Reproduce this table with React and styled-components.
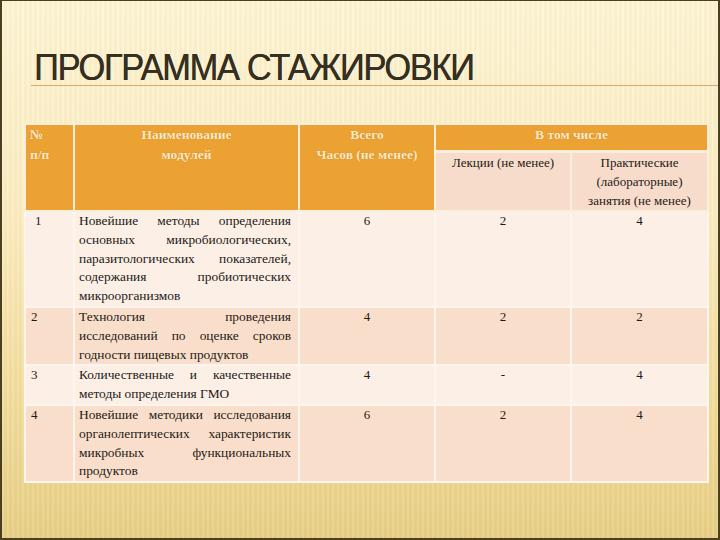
import React from 'react';
import styled, { createGlobalStyle } from 'styled-components';

const GlobalStyle = createGlobalStyle`
  html, body {
    margin: 0;
    padding: 0;
  }
  body {
    width: 720px;
    height: 540px;
    overflow: hidden;
    font-family: "Liberation Serif", "DejaVu Serif", serif;
  }
`;

const rows = [
  {
    n: '1',
    title:
      'Новейшие методы определения основных микробиологических, паразитологических показателей, содержания пробиотических микроорганизмов',
    total: '6',
    lect: '2',
    prac: '4',
  },
  {
    n: '2',
    title: 'Технология проведения исследований по оценке сроков годности пищевых продуктов',
    total: '4',
    lect: '2',
    prac: '2',
  },
  {
    n: '3',
    title: 'Количественные и качественные методы определения ГМО',
    total: '4',
    lect: '-',
    prac: '4',
  },
  {
    n: '4',
    title:
      'Новейшие методики исследования органолептических характеристик микробных функциональных продуктов',
    total: '6',
    lect: '2',
    prac: '4',
  },
];

export default function App() {
  return (
    <>
      <GlobalStyle />
      <Slide>
        <TitleBar>
          <Title>ПРОГРАММА СТАЖИРОВКИ</Title>
        </TitleBar>
        <Table>
          <colgroup>
            <col style={{ width: 49 }} />
            <col style={{ width: 225 }} />
            <col style={{ width: 136 }} />
            <col style={{ width: 136 }} />
            <col style={{ width: 137 }} />
          </colgroup>
          <thead>
            <tr>
              <HeadCell rowSpan={2} $align="left">
                №<br />п/п
              </HeadCell>
              <HeadCell rowSpan={2}>
                Наименование
                <br />
                модулей
              </HeadCell>
              <HeadCell rowSpan={2}>
                Всего
                <br />
                Часов (не менее)
              </HeadCell>
              <HeadCell colSpan={2} $short>
                В том числе
              </HeadCell>
            </tr>
            <tr>
              <SubHeadCell>Лекции (не менее)</SubHeadCell>
              <SubHeadCell>
                Практические
                <br />
                (лабораторные)
                <br />
                занятия (не менее)
              </SubHeadCell>
            </tr>
          </thead>
          <tbody>
            {rows.map((r, i) => (
              <Row key={r.n} $dark={i % 2 === 1}>
                <NumCell $indent={i === 0}>{r.n}</NumCell>
                <TextCell>{r.title}</TextCell>
                <ValueCell>{r.total}</ValueCell>
                <ValueCell>{r.lect}</ValueCell>
                <ValueCell>{r.prac}</ValueCell>
              </Row>
            ))}
          </tbody>
        </Table>
      </Slide>
    </>
  );
}

const Slide = styled.div`
  box-sizing: border-box;
  width: 720px;
  height: 540px;
  border: 2px solid #4b3f22;
  border-top-width: 1px;
  padding: 0 11px 0 22px;
  background:
    repeating-linear-gradient(
      90deg,
      rgba(255, 255, 255, 0.08) 0px,
      rgba(255, 255, 255, 0.08) 2px,
      rgba(190, 150, 60, 0.05) 2px,
      rgba(190, 150, 60, 0.05) 5px
    ),
    linear-gradient(180deg, #fdf5d6 0%, #fbecc2 40%, #f1dc9c 75%, #e7cf86 100%);
`;

const TitleBar = styled.div`
  height: 84px;
  margin-right: -11px;
  margin-left: 7px;
  border-bottom: 1px solid #d9ab6c;
  display: flex;
  align-items: flex-end;
`;

const Title = styled.h1`
  margin: 0 0 -1px 3px;
  font-family: "Liberation Sans", Arial, sans-serif;
  font-weight: 400;
  font-size: 37px;
  line-height: 37px;
  letter-spacing: -1.4px;
  color: #352f22;
  text-shadow: 0.4px 0 0 #352f22;
  transform: scaleX(0.93);
  transform-origin: left bottom;
`;

const Table = styled.table`
  margin-top: 37px;
  width: 683px;
  table-layout: fixed;
  border-collapse: collapse;
  font-family: "Liberation Serif", "DejaVu Serif", serif;
  font-size: 13px;
  color: #1e1a16;
`;

const HeadCell = styled.th`
  background: #eca232;
  color: #fcebc9;
  font-family: "Liberation Serif", "DejaVu Serif", serif;
  font-weight: 700;
  font-size: 13.5px;
  line-height: 20px;
  vertical-align: top;
  text-align: ${(p) => p.$align || 'center'};
  padding: ${(p) => (p.$short ? '0 4px 5px' : '0 4px')};
  border: 2px solid #fbefdc;
  text-shadow: 0 0 1px rgba(150, 80, 10, 0.5);
`;

const SubHeadCell = styled.th`
  background: #f8dccb;
  color: #1e1a16;
  font-family: "Liberation Serif", "DejaVu Serif", serif;
  font-weight: 400;
  font-size: 13px;
  line-height: 19px;
  vertical-align: top;
  text-align: center;
  padding: 0 2px 0;
  border: 2px solid #fbefdc;
  border-top-width: 3px;
`;

const Row = styled.tr`
  background: ${(p) => (p.$dark ? '#f9dfcb' : '#fbefe6')};
`;

const Cell = styled.td`
  border: 2px solid #fdf5ee;
  border-top-color: #f6e5d9;
  vertical-align: top;
  font-family: "Liberation Serif", "DejaVu Serif", serif;
  font-size: 13px;
  line-height: 18.8px;
  padding: 0 6px 0;
`;

const NumCell = styled(Cell)`
  padding-left: ${(p) => (p.$indent ? '9px' : '5px')};
`;

const TextCell = styled(Cell)`
  text-align: justify;
  padding: 0 7px 0 4px;
  font-size: 13.4px;
`;

const ValueCell = styled(Cell)`
  text-align: center;
`;
